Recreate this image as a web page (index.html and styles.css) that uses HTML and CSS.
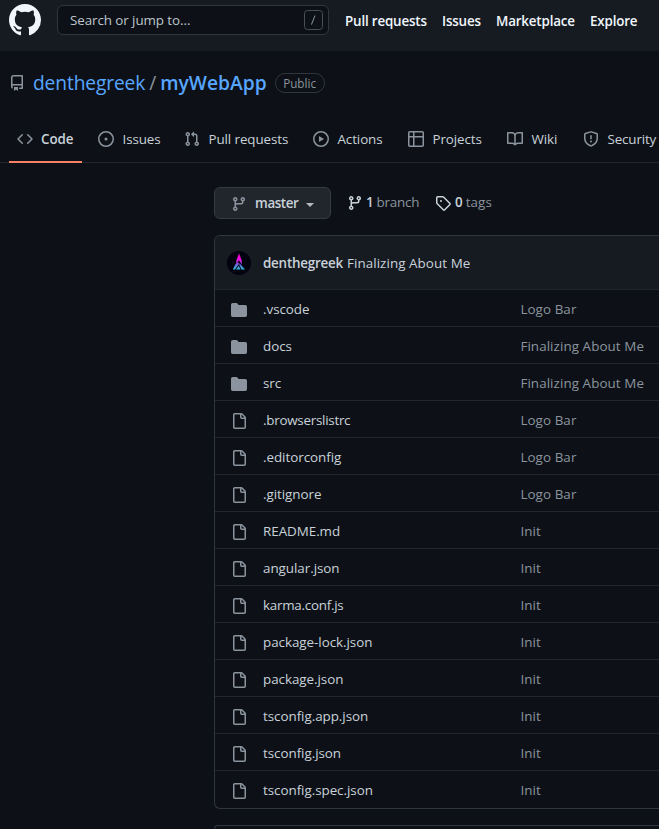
FILE: index.html
```html
<!DOCTYPE html>
<html lang="en">
<head>
<meta charset="utf-8">
<title>denthegreek/myWebApp</title>
<link rel="stylesheet" href="styles.css">
</head>
<body>
<svg class="defs" aria-hidden="true">
  <symbol id="file" viewBox="0 0 16 16"><path fill-rule="evenodd" d="M3.75 1.5a.25.25 0 00-.25.25v12.5c0 .138.112.25.25.25h9.5a.25.25 0 00.25-.25V6h-2.75A1.75 1.75 0 019 4.25V1.5H3.75zm6.75.062V4.25c0 .138.112.25.25.25h2.688a.252.252 0 00-.011-.013l-2.914-2.914a.272.272 0 00-.013-.011zM2 1.75C2 .784 2.784 0 3.75 0h6.586c.464 0 .909.184 1.237.513l2.914 2.914c.329.328.513.773.513 1.237v9.586A1.75 1.75 0 0113.25 16h-9.5A1.75 1.75 0 012 14.25V1.75z"/></symbol>
  <symbol id="folder" viewBox="0 0 16 16"><path d="M1.75 1A1.75 1.75 0 000 2.75v10.5C0 14.216.784 15 1.75 15h12.5A1.75 1.75 0 0016 13.25v-8.5A1.75 1.75 0 0014.25 3h-6.5a.25.25 0 01-.2-.1l-.9-1.2c-.33-.44-.85-.7-1.4-.7h-3.5z"/></symbol>
  <symbol id="branch" viewBox="0 0 16 16"><path fill-rule="evenodd" d="M11.75 2.5a.75.75 0 100 1.5.75.75 0 000-1.5zm-2.25.75a2.25 2.25 0 113 2.122V6A2.5 2.5 0 0110 8.5H6a1 1 0 00-1 1v1.128a2.251 2.251 0 11-1.5 0V5.372a2.25 2.25 0 111.5 0v1.836A2.492 2.492 0 016 7h4a1 1 0 001-1v-.628A2.25 2.25 0 019.5 3.25zM4.25 12a.75.75 0 100 1.5.75.75 0 000-1.5zM3.5 3.25a.75.75 0 111.5 0 .75.75 0 01-1.5 0z"/></symbol>
</svg>

<header class="topbar">
  <svg class="logo" viewBox="0 0 16 16"><path fill-rule="evenodd" d="M8 0C3.58 0 0 3.58 0 8c0 3.54 2.29 6.53 5.47 7.59.4.07.55-.17.55-.38 0-.19-.01-.82-.01-1.49-2.01.37-2.53-.49-2.69-.94-.09-.23-.48-.94-.82-1.13-.28-.15-.68-.52-.01-.53.63-.01 1.08.58 1.23.82.72 1.21 1.87.87 2.33.66.07-.52.28-.87.51-1.07-1.78-.2-3.64-.89-3.64-3.95 0-.87.31-1.59.82-2.15-.08-.2-.36-1.02.08-2.12 0 0 .67-.21 2.2.82.64-.18 1.32-.27 2-.27.68 0 1.36.09 2 .27 1.53-1.04 2.2-.82 2.2-.82.44 1.1.16 1.92.08 2.12.51.56.82 1.27.82 2.15 0 3.07-1.87 3.75-3.65 3.95.29.25.54.73.54 1.48 0 1.07-.01 1.93-.01 2.2 0 .21.15.46.55.38A8.013 8.013 0 0016 8c0-4.42-3.58-8-8-8z"/></svg>
  <div class="search"><span class="search-label">Search or jump to...</span>
    <svg class="slash" viewBox="0 0 19 20"><rect x=".5" y=".5" width="18" height="19" rx="3"/><path d="M7.5 14.5l3.5-9"/></svg>
  </div>
  <nav class="global-nav"><a class="nav-pulls">Pull requests</a><a class="nav-issues">Issues</a><a class="nav-market">Marketplace</a><a>Explore</a></nav>
</header>

<div class="repo-title">
  <svg class="icon" viewBox="0 0 16 16"><path fill-rule="evenodd" d="M2 2.5A2.5 2.5 0 014.5 0h8.75a.75.75 0 01.75.75v12.5a.75.75 0 01-.75.75h-2.5a.75.75 0 110-1.5h1.75v-2h-8a1 1 0 00-.714 1.7.75.75 0 01-1.072 1.05A2.495 2.495 0 012 11.5v-9zm10.5-1V9h-8c-.356 0-.694.074-1 .208V2.5a1 1 0 011-1h8zM5 12.25v3.25a.25.25 0 00.4.2l1.45-1.087a.25.25 0 01.3 0L8.6 15.7a.25.25 0 00.4-.2v-3.25a.25.25 0 00-.25-.25h-3.5a.25.25 0 00-.25.25z"/></svg>
  <a class="owner">denthegreek</a><span class="divider">/</span><a class="repo">myWebApp</a><span class="badge">Public</span>
</div>

<nav class="tabs">
  <a class="tab tab-code"><svg class="icon" viewBox="0 0 16 16"><path fill-rule="evenodd" d="M4.72 3.22a.75.75 0 011.06 1.06L2.06 8l3.72 3.72a.75.75 0 11-1.06 1.06L.47 8.53a.75.75 0 010-1.06l4.25-4.25zm6.56 0a.75.75 0 10-1.06 1.06L13.94 8l-3.72 3.72a.75.75 0 101.06 1.06l4.25-4.25a.75.75 0 000-1.06l-4.25-4.25z"/></svg><span>Code</span></a>
  <a class="tab tab-issues"><svg class="icon" viewBox="0 0 16 16"><path d="M8 9.5a1.5 1.5 0 100-3 1.5 1.5 0 000 3z"/><path fill-rule="evenodd" d="M8 0a8 8 0 100 16A8 8 0 008 0zM1.5 8a6.5 6.5 0 1113 0 6.5 6.5 0 01-13 0z"/></svg><span>Issues</span></a>
  <a class="tab tab-pulls"><svg class="icon" viewBox="0 0 16 16"><path fill-rule="evenodd" d="M7.177 3.073L9.573.677A.25.25 0 0110 .854v4.792a.25.25 0 01-.427.177L7.177 3.427a.25.25 0 010-.354zM3.75 2.5a.75.75 0 100 1.5.75.75 0 000-1.5zm-2.25.75a2.25 2.25 0 113 2.122v5.256a2.251 2.251 0 11-1.5 0V5.372A2.25 2.25 0 011.5 3.25zM11 2.5h-1V4h1a1 1 0 011 1v5.628a2.251 2.251 0 101.5 0V5A2.5 2.5 0 0011 2.5zm1 10.25a.75.75 0 111.5 0 .75.75 0 01-1.5 0zM3.75 12a.75.75 0 100 1.5.75.75 0 000-1.5z"/></svg><span>Pull requests</span></a>
  <a class="tab tab-actions"><svg class="icon" viewBox="0 0 16 16"><path fill-rule="evenodd" d="M1.5 8a6.5 6.5 0 1113 0 6.5 6.5 0 01-13 0zM8 0a8 8 0 100 16A8 8 0 008 0zM6.379 5.227A.25.25 0 006 5.442v5.117a.25.25 0 00.379.214l4.264-2.559a.25.25 0 000-.428L6.379 5.227z"/></svg><span>Actions</span></a>
  <a class="tab tab-projects"><svg class="icon" viewBox="0 0 16 16"><path fill-rule="evenodd" d="M1.75 0A1.75 1.75 0 000 1.75v12.5C0 15.216.784 16 1.75 16h12.5A1.75 1.75 0 0016 14.25V1.75A1.75 1.75 0 0014.25 0H1.75zM1.5 1.75a.25.25 0 01.25-.25H5V5H1.5V1.75zM6.5 1.5h7.75a.25.25 0 01.25.25V5h-8V1.5zM1.5 6.5H5v8H1.75a.25.25 0 01-.25-.25V6.5zM6.5 6.5h8v7.75a.25.25 0 01-.25.25H6.5v-8z"/></svg><span>Projects</span></a>
  <a class="tab tab-wiki"><svg class="icon" viewBox="0 0 16 16"><path fill-rule="evenodd" d="M0 1.75A.75.75 0 01.75 1h4.253c1.227 0 2.317.59 3 1.501A3.744 3.744 0 0111.006 1h4.245a.75.75 0 01.75.75v10.5a.75.75 0 01-.75.75h-4.507a2.25 2.25 0 00-1.591.659l-.622.621a.75.75 0 01-1.06 0l-.622-.621A2.25 2.25 0 005.258 13H.75a.75.75 0 01-.75-.75V1.75zm8.755 3a2.25 2.25 0 012.25-2.25H14.5v9h-3.757c-.71 0-1.4.201-1.992.572l.004-7.322zm-1.504 7.324l.004-5.073-.002-2.253A2.25 2.25 0 005.003 2.5H1.5v9h3.757a3.75 3.75 0 011.994.574z"/></svg><span>Wiki</span></a>
  <a class="tab tab-security"><svg class="icon" viewBox="0 0 16 16"><path fill-rule="evenodd" d="M7.467.133a1.75 1.75 0 011.066 0l5.25 1.68A1.75 1.75 0 0115 3.48V7c0 1.566-.32 3.182-1.303 4.682-.983 1.498-2.585 2.813-5.032 3.855a1.7 1.7 0 01-1.33 0c-2.447-1.042-4.049-2.357-5.032-3.855C1.32 10.182 1 8.566 1 7V3.48a1.75 1.75 0 011.217-1.667l5.25-1.68zm.61 1.429a.25.25 0 00-.153 0l-5.25 1.68a.25.25 0 00-.174.238V7c0 1.358.275 2.666 1.057 3.86.784 1.194 2.121 2.34 4.366 3.297a.2.2 0 00.154 0c2.245-.956 3.582-2.104 4.366-3.298C13.225 9.666 13.5 8.36 13.5 7V3.48a.25.25 0 00-.174-.237l-5.25-1.68zM9 10.5a1 1 0 11-2 0 1 1 0 012 0zm-.25-5.75a.75.75 0 10-1.5 0v3a.75.75 0 001.5 0v-3z"/></svg><span>Security</span></a>
</nav>

<main class="content">
  <div class="ref-row">
    <button class="branch-button"><svg class="icon"><use href="#branch"/></svg><span>master</span><i class="caret"></i></button>
    <a class="stat stat-branch"><svg class="icon"><use href="#branch"/></svg><b>1</b><span>branch</span></a>
    <a class="stat stat-tags"><svg class="icon" viewBox="0 0 16 16"><path fill-rule="evenodd" d="M2.5 7.775V2.75a.25.25 0 01.25-.25h5.025a.25.25 0 01.177.073l6.25 6.25a.25.25 0 010 .354l-5.025 5.025a.25.25 0 01-.354 0l-6.25-6.25a.25.25 0 01-.073-.177zm-1.5 0V2.75C1 1.784 1.784 1 2.75 1h5.025c.464 0 .91.184 1.238.513l6.25 6.25a1.75 1.75 0 010 2.474l-5.026 5.026a1.75 1.75 0 01-2.474 0l-6.25-6.25A1.75 1.75 0 011 7.775zM6 5a1 1 0 100 2 1 1 0 000-2z"/></svg><b>0</b><span>tags</span></a>
  </div>

  <section class="files">
    <div class="commit">
      <svg class="avatar" viewBox="0 0 24 24">
        <defs><linearGradient id="peak" x1="0" y1="3" x2="0" y2="19" gradientUnits="userSpaceOnUse"><stop offset="0" stop-color="#ff00d0"/><stop offset=".4" stop-color="#e010e0"/><stop offset=".7" stop-color="#6070d0"/><stop offset="1" stop-color="#20c8d8"/></linearGradient></defs>
        <circle cx="12" cy="12" r="12" fill="#03020f"/>
        <path fill="url(#peak)" d="M12 2.5l2.8 7v4L12 9.5 9 12.500 9.300 9.500zM8.500 13l2.500-2 1 2-4 5.500H5.800zM12.500 12l5.500 6.500h-3.500L12.300 14zM9 18.500l2.800-3.800 1.700 3.800z"/>
      </svg>
      <b>denthegreek</b><span>Finalizing About Me</span>
    </div>
    <div class="row"><svg class="icon"><use href="#folder"/></svg><a>.vscode</a><span>Logo Bar</span></div>
    <div class="row"><svg class="icon"><use href="#folder"/></svg><a>docs</a><span>Finalizing About Me</span></div>
    <div class="row"><svg class="icon"><use href="#folder"/></svg><a>src</a><span>Finalizing About Me</span></div>
    <div class="row"><svg class="icon"><use href="#file"/></svg><a class="tight">.browserslistrc</a><span>Logo Bar</span></div>
    <div class="row"><svg class="icon"><use href="#file"/></svg><a>.editorconfig</a><span>Logo Bar</span></div>
    <div class="row"><svg class="icon"><use href="#file"/></svg><a>.gitignore</a><span>Logo Bar</span></div>
    <div class="row"><svg class="icon"><use href="#file"/></svg><a>README.md</a><span>Init</span></div>
    <div class="row"><svg class="icon"><use href="#file"/></svg><a>angular.json</a><span>Init</span></div>
    <div class="row"><svg class="icon"><use href="#file"/></svg><a class="tight">karma.conf.js</a><span>Init</span></div>
    <div class="row"><svg class="icon"><use href="#file"/></svg><a>package-lock.json</a><span>Init</span></div>
    <div class="row"><svg class="icon"><use href="#file"/></svg><a>package.json</a><span>Init</span></div>
    <div class="row"><svg class="icon"><use href="#file"/></svg><a>tsconfig.app.json</a><span>Init</span></div>
    <div class="row"><svg class="icon"><use href="#file"/></svg><a>tsconfig.json</a><span>Init</span></div>
    <div class="row"><svg class="icon"><use href="#file"/></svg><a>tsconfig.spec.json</a><span>Init</span></div>
  </section>
  <section class="readme"></section>
</main>
</body>
</html>
```
FILE: styles.css
```css
* { box-sizing: border-box; }
body {
  margin: 0;
  height: 829px;
  overflow: hidden;
  background: #0d1117;
  color: #c9d1d9;
  font: 13.4px/20px "Open Sans", "Noto Sans", sans-serif;
}
.defs { display: none; }
svg { display: block; flex: none; }
.icon { width: 16px; height: 16px; fill: #8b949e; }
a, span, b { white-space: nowrap; }
b { font-weight: 600; }

.topbar {
  display: flex;
  height: 51px;
  padding: 4px 0 0 9px;
  background: #161b22;
}
.logo { width: 32px; height: 32px; fill: #f0f6fc; }
.search {
  display: flex;
  align-items: center;
  justify-content: space-between;
  width: 272px;
  height: 30px;
  margin: 1px 16px 0;
  padding: 0 5px 0 12px;
  background: #0d1117;
  border: 1px solid #30363d;
  border-radius: 6px;
}
.search-label { color: #bec5cc; letter-spacing: -.08px; }
.slash { width: 19px; height: 20px; fill: none; stroke: #484f58; }
.slash path { stroke: #8b949e; }
.global-nav { display: flex; padding-top: 7px; color: #f0f6fc; font-weight: 600; letter-spacing: -.18px; }
.global-nav a { flex: none; }
.nav-pulls { width: 97px; }
.nav-issues { width: 54px; }
.nav-market { width: 94px; }

.repo-title {
  display: flex;
  align-items: center;
  height: 30px;
  margin-top: 17px;
  padding-left: 9px;
  font-size: 19.2px;
  line-height: 30px;
}
.repo-title .icon { margin: -1px 8px 0 0; }
.owner, .repo { color: #58a6ff; letter-spacing: -.12px; }
.repo { font-weight: 600; letter-spacing: 0; }
.divider { margin: 0 4px; color: #8b949e; }
.badge {
  width: 50px;
  height: 20px;
  margin: -1px 0 0 8px;
  border: 1px solid #30363d;
  border-radius: 10px;
  color: #8b949e;
  font-size: 11.7px;
  line-height: 18px;
  text-align: center;
}

.tabs {
  display: flex;
  height: 48px;
  margin-top: 17px;
  padding-left: 9px;
  border-bottom: 1px solid #21262d;
}
.tab { display: flex; flex: none; gap: 8.5px; height: 48px; padding: 16px 0 0 8px; letter-spacing: -.1px; }
.tab span { margin-top: -2px; }
.tab-code { gap: 8px; width: 73px; margin-right: 8px; border-bottom: 2px solid #f78166; font-weight: 600; }
.tab-issues { width: 86px; }
.tab-pulls { width: 129px; }
.tab-actions { width: 95px; }
.tab-projects { width: 99px; }
.tab-wiki { width: 76px; }
.tab-security { letter-spacing: -.15px; }

.content { padding: 24px 0 0 214px; }
.ref-row { display: flex; align-items: center; height: 32px; }
.branch-button {
  display: flex;
  align-items: center;
  width: 117px;
  height: 32px;
  margin-right: 16px;
  padding: 0 0 0 16px;
  background: #21262d;
  border: 1px solid #363b42;
  border-radius: 6px;
  color: #c9d1d9;
  font: inherit;
  font-weight: 600;
  letter-spacing: -.4px;
}
.branch-button .icon { margin: 2px 8px 0 0; }
.caret {
  margin: 3px 0 0 8px;
  border: 4px solid transparent;
  border-top-color: #b1bac4;
  border-bottom: 0;
}
.stat { display: flex; align-items: center; gap: 3px; color: #8b949e; }
.stat .icon { fill: #c9d1d9; }
.stat b { color: #c9d1d9; }
.stat b, .stat span { margin-top: -2px; }
.stat-branch { width: 88px; letter-spacing: -.2px; }
.stat-tags b { margin-left: 1px; }
.stat-tags span { letter-spacing: .1px; }

.files {
  margin-top: 16px;
  border: 1px solid #30363d;
  border-right: 0;
  border-radius: 6px 0 0 6px;
  overflow: hidden;
}
.commit { display: flex; align-items: center; height: 53px; padding-left: 12px; background: #161b22; }
.avatar { width: 24px; height: 24px; margin-right: 12px; }
.commit b { margin-right: 4px; letter-spacing: -.22px; }
.commit span { letter-spacing: .07px; }
.row {
  display: grid;
  grid-template-columns: 32px 257px 1fr;
  align-items: start;
  height: 37px;
  padding: 9px 0 0 16px;
  border-top: 1px solid #21262d;
}
.row:last-child { height: 38px; }
.row .icon { margin-top: 3px; }
.row a { letter-spacing: -.04px; }
.row .tight { letter-spacing: -.26px; }
.row span { padding-left: .4px; color: #8b949e; letter-spacing: .08px; }
.readme {
  height: 4px;
  margin-top: 16px;
  border: 1px solid #30363d;
  border-width: 1px 0 0 1px;
  border-radius: 6px 0 0 0;
}
```
